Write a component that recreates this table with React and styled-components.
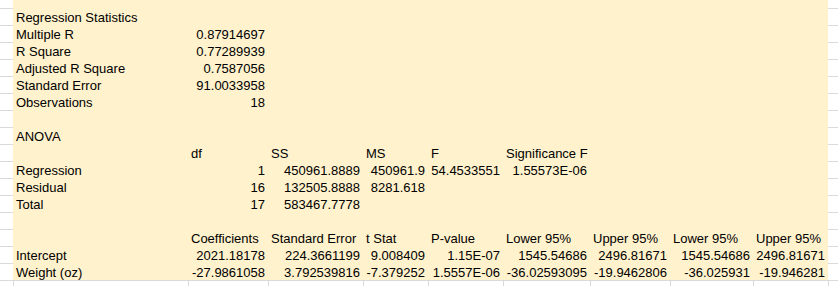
import React from "react";
import styled, { createGlobalStyle } from "styled-components";

const GlobalStyle = createGlobalStyle`
  html, body { margin: 0; padding: 0; background: #ffffff; }
  body { font-family: "Liberation Sans", Arial, sans-serif; }
`;

const COLS = [175, 80, 95, 65, 75, 87, 80, 83, 75];
const TEMPLATE = `13px ${COLS.map((c) => c + "px").join(" ")} 1fr`;
const GRID = "#dadada";
const FILL = "#fff2cc";

const Sheet = styled.div`
  width: 838px;
  display: flex;
  flex-direction: column;
  color: #000;
  font-size: 13px;
`;

const Row = styled.div`
  display: grid;
  grid-template-columns: ${TEMPLATE};
  height: ${(p) => p.$h}px;
`;

const Gutter = styled.div`
  box-sizing: border-box;
  border-bottom: 1px solid ${GRID};
`;

const Cell = styled.div`
  box-sizing: border-box;
  background: ${FILL};
  padding: 2px 3px 0 3px;
  line-height: 14px;
  white-space: nowrap;
  text-align: ${(p) => (p.$num ? "right" : "left")};
  border-bottom: ${(p) => (p.$last ? `1px solid ${GRID}` : "none")};
`;

const Strip = styled.div`
  display: grid;
  grid-template-columns: ${TEMPLATE};
  height: 6px;
`;

const StripCell = styled.div`
  border-left: ${(p) => (p.$first ? "none" : `1px solid ${GRID}`)};
`;

const isNum = (v) => /^-?[0-9.]+(E-?\d+)?$/.test(v);

const DATA = [
  ["Regression Statistics"],
  ["Multiple R", "0.87914697"],
  ["R Square", "0.77289939"],
  ["Adjusted R Square", "0.7587056"],
  ["Standard Error", "91.0033958"],
  ["Observations", "18"],
  [],
  ["ANOVA"],
  ["", "df", "SS", "MS", "F", "Significance F"],
  ["Regression", "1", "450961.8889", "450961.9", "54.4533551", "1.55573E-06"],
  ["Residual", "16", "132505.8888", "8281.618"],
  ["Total", "17", "583467.7778"],
  [],
  ["", "Coefficients", "Standard Error", "t Stat", "P-value", "Lower 95%", "Upper 95%", "Lower 95%", "Upper 95%"],
  ["Intercept", "2021.18178", "224.3661199", "9.008409", "1.15E-07", "1545.54686", "2496.81671", "1545.54686", "2496.81671"],
  ["Weight (oz)", "-27.9861058", "3.792539816", "-7.379252", "1.5557E-06", "-36.02593095", "-19.9462806", "-36.025931", "-19.946281"],
];

function SheetRow({ values, height, last }) {
  return (
    <Row $h={height}>
      <Gutter />
      {COLS.map((_, i) => {
        const v = values[i] || "";
        return (
          <Cell key={i} $num={isNum(v)} $last={last}>
            {v}
          </Cell>
        );
      })}
      <Gutter />
    </Row>
  );
}

export default function App() {
  return (
    <>
      <GlobalStyle />
      <Sheet>
        <SheetRow values={[]} height={9} />
        {DATA.map((r, i) => (
          <SheetRow key={i} values={r} height={17} last={i === DATA.length - 1} />
        ))}
        <Strip>
          <StripCell $first />
          {COLS.map((_, i) => (
            <StripCell key={i} />
          ))}
          <StripCell />
        </Strip>
      </Sheet>
    </>
  );
}
